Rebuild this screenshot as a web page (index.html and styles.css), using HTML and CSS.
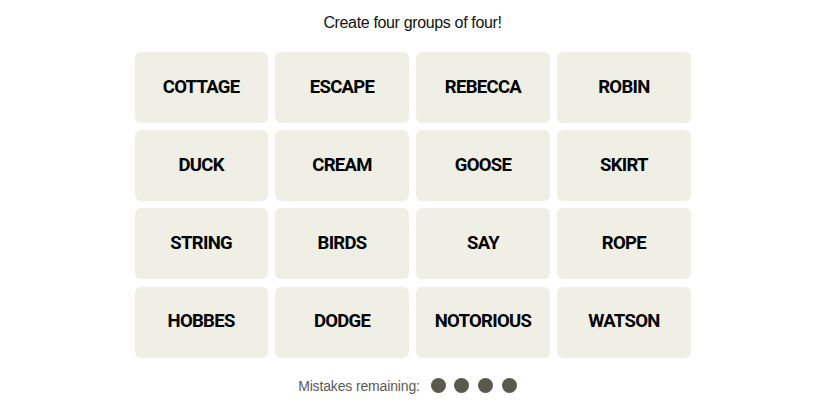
FILE: index.html
```html
<!DOCTYPE html>
<html>
<head>
<meta charset="utf-8">
<link rel="stylesheet" href="styles.css">
</head>
<body>
<main class="game">
  <p class="prompt">Create four groups of four!</p>
  <div class="board">
    <div class="tile">COTTAGE</div>
    <div class="tile">ESCAPE</div>
    <div class="tile">REBECCA</div>
    <div class="tile">ROBIN</div>
    <div class="tile">DUCK</div>
    <div class="tile">CREAM</div>
    <div class="tile">GOOSE</div>
    <div class="tile">SKIRT</div>
    <div class="tile">STRING</div>
    <div class="tile">BIRDS</div>
    <div class="tile">SAY</div>
    <div class="tile">ROPE</div>
    <div class="tile">HOBBES</div>
    <div class="tile">DODGE</div>
    <div class="tile">NOTORIOUS</div>
    <div class="tile">WATSON</div>
  </div>
  <div class="mistakes">
    <span class="label">Mistakes remaining:</span>
    <span class="dots">
      <span class="dot"></span><span class="dot"></span><span class="dot"></span><span class="dot"></span>
    </span>
  </div>
</main>
</body>
</html>
```
FILE: styles.css
```css
html, body {
  margin: 0;
  padding: 0;
  background: #ffffff;
}
body {
  font-family: "Liberation Sans", Arial, sans-serif;
  color: #000;
}
.game {
  width: 825px;
  display: flex;
  flex-direction: column;
  align-items: center;
}
.prompt {
  margin: 13px 0 0 0;
  font-size: 16px;
  line-height: 20px;
  letter-spacing: -0.35px;
  color: #121212;
}
.board {
  margin-top: 19px;
  width: 556px;
  display: grid;
  grid-template-columns: repeat(4, 1fr);
  grid-auto-rows: 71px;
  column-gap: 7.7px;
  row-gap: 7.2px;
}
.tile {
  background: #efefe6;
  border-radius: 6px;
  display: flex;
  align-items: center;
  justify-content: center;
  padding-bottom: 2px;
  font-family: Roboto, "Liberation Sans", sans-serif;
  font-weight: bold;
  font-size: 18.5px;
  letter-spacing: -0.7px;
  color: #000;
}
.mistakes {
  margin-top: 20px;
  margin-right: 10px;
  display: flex;
  align-items: center;
  gap: 11px;
  font-size: 14px;
  color: #5a5a5a;
}
.label {
  letter-spacing: -0.15px;
}
.dots {
  display: flex;
  gap: 8.7px;
}
.dot {
  width: 15px;
  height: 15px;
  border-radius: 50%;
  background: #5a594e;
}
```
